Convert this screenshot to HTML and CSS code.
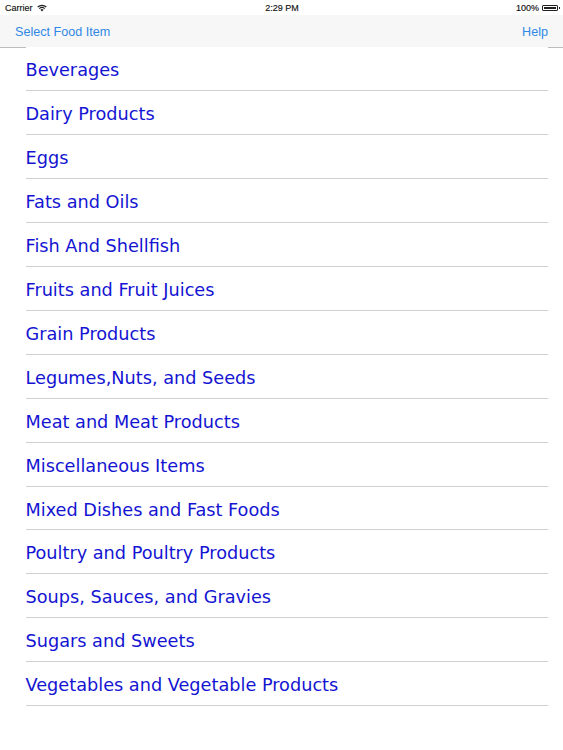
FILE: index.html
```html
<!DOCTYPE html>
<html lang="en">
<head>
    <meta charset="UTF-8">
    <meta name="viewport" content="width=device-width, initial-scale=1.0">
    <title>Select Food Item</title>
    <link rel="stylesheet" href="styles.css">
</head>
<body>

    <div class="status-bar">
        <div class="status-left">
            <span>Carrier</span>
            <svg class="wifi" width="10" height="8" viewBox="0 0 10 8">
                <path d="M0.3 2.6 A6.8 6.8 0 0 1 9.7 2.6 L8.9 3.5 A5.6 5.6 0 0 0 1.1 3.5 Z" fill="#222"/>
                <path d="M1.9 4.2 A4.5 4.5 0 0 1 8.1 4.2 L7.3 5.1 A3.3 3.3 0 0 0 2.7 5.1 Z" fill="#222"/>
                <path d="M3.4 5.8 A2.3 2.3 0 0 1 6.6 5.8 L5 7.6 Z" fill="#222"/>
            </svg>
        </div>
        <div class="status-time">2:29 PM</div>
        <div class="status-right">
            <span>100%</span>
            <span class="battery"><span class="battery-fill"></span></span>
        </div>
    </div>

    <div class="nav-bar">
        <a class="nav-link">Select Food Item</a>
        <a class="nav-link">Help</a>
    </div>

    <ul class="food-list">
        <li>Beverages</li>
        <li>Dairy Products</li>
        <li>Eggs</li>
        <li>Fats and Oils</li>
        <li>Fish And Shellfish</li>
        <li>Fruits and Fruit Juices</li>
        <li>Grain Products</li>
        <li>Legumes,Nuts, and Seeds</li>
        <li>Meat and Meat Products</li>
        <li>Miscellaneous Items</li>
        <li>Mixed Dishes and Fast Foods</li>
        <li>Poultry and Poultry Products</li>
        <li>Soups, Sauces, and Gravies</li>
        <li>Sugars and Sweets</li>
        <li>Vegetables and Vegetable Products</li>
    </ul>

</body>
</html>
```

FILE: styles.css
```css
html, body {
    margin: 0;
    padding: 0;
}
body {
    width: 563px;
    height: 750px;
    overflow: hidden;
    background-color: #fff;
    font-family: "Liberation Sans", Arial, sans-serif;
}
.status-bar {
    height: 15px;
    padding: 0 4px 0 5px;
    display: grid;
    grid-template-columns: 1fr auto 1fr;
    align-items: center;
    font-size: 9px;
    color: #111;
    -webkit-text-stroke: 0.15px #111;
}
.status-left {
    display: flex;
    align-items: center;
    gap: 4px;
}
.status-right {
    display: flex;
    align-items: center;
    justify-content: flex-end;
    gap: 3px;
    padding-right: 1px;
}
.battery {
    width: 16px;
    height: 6px;
    border: 1px solid #222;
    border-radius: 1px;
    padding: 1px;
    box-sizing: border-box;
    display: flex;
    position: relative;
}
.battery::after {
    content: "";
    position: absolute;
    right: -3px;
    top: 1px;
    width: 1px;
    height: 2px;
    background-color: #222;
}
.battery-fill {
    flex: 1;
    background-color: #222;
}
.nav-bar {
    height: 31px;
    padding: 1px 15px 0;
    display: flex;
    align-items: center;
    justify-content: space-between;
    background-color: #f7f7f7;
    border-bottom: 1px solid #bcbcbc;
}
.nav-link {
    font-size: 12.6px;
    color: #2f88e6;
}
.food-list {
    list-style: none;
    margin: -1px 15px 0 26px;
    padding: 0;
    background-color: #fff;
    position: relative;
}
.food-list li {
    height: 42.96px;
    line-height: 46px;
    border-bottom: 1px solid #d0d0d0;
    font-family: "DejaVu Sans", Verdana, sans-serif;
    font-size: 17.7px;
    text-indent: -0.5px;
    color: #1414d2;
    white-space: nowrap;
}
```
